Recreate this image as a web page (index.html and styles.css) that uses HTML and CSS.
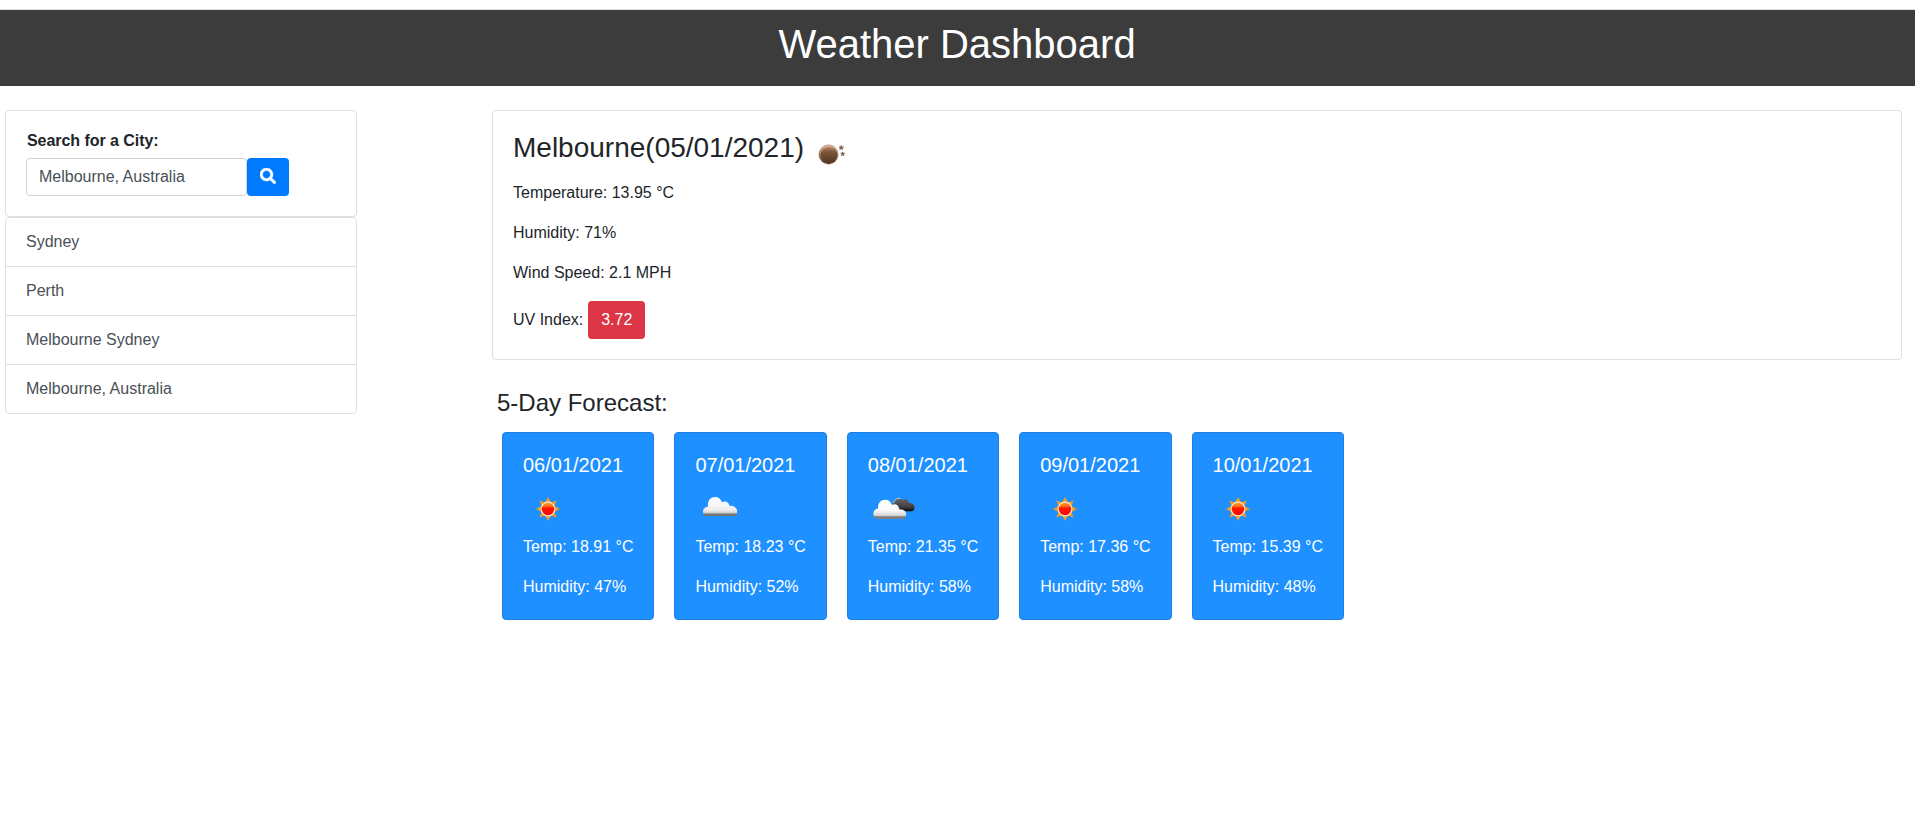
FILE: index.html
```html
<!DOCTYPE html>
<html lang="en">
<head>
<meta charset="utf-8">
<title>Weather Dashboard</title>
<link rel="stylesheet" href="styles.css">
</head>
<body>
<svg class="defs" width="0" height="0">
  <defs>
    <linearGradient id="sunFill" x1="0" y1="0" x2="0" y2="1"><stop offset="0" stop-color="#ffa21a"/><stop offset=".3" stop-color="#ff6a1a"/><stop offset=".42" stop-color="#ff1a00"/><stop offset="1" stop-color="#f80000"/></linearGradient>
    <linearGradient id="cloudFill" x1="0" y1="0" x2="0" y2="1"><stop offset="0" stop-color="#fff"/><stop offset=".4" stop-color="#f6f6f6"/><stop offset=".7" stop-color="#ececec"/><stop offset=".86" stop-color="#c8c8c8"/><stop offset=".88" stop-color="#6e6e6e"/><stop offset="1" stop-color="#777"/></linearGradient>
    <linearGradient id="frontFill" x1="0" y1="0" x2="0" y2="1"><stop offset="0" stop-color="#fff"/><stop offset=".55" stop-color="#fafafa"/><stop offset=".84" stop-color="#d0d0d0"/><stop offset=".88" stop-color="#7a7a7a"/><stop offset="1" stop-color="#808080"/></linearGradient>
    <linearGradient id="darkFill" x1="0" y1="0" x2="0" y2="1"><stop offset="0" stop-color="#666"/><stop offset=".6" stop-color="#444"/><stop offset=".85" stop-color="#222"/><stop offset="1" stop-color="#000"/></linearGradient>
    <linearGradient id="moonFill" x1="0" y1="0" x2="0" y2="1"><stop offset="0" stop-color="#b88a6c"/><stop offset=".3" stop-color="#7d5639"/><stop offset="1" stop-color="#533320"/></linearGradient>
    <linearGradient id="moonRim" x1="0" y1="0" x2="0" y2="1"><stop offset="0" stop-color="#e0b79d"/><stop offset="1" stop-color="#5b3a27"/></linearGradient>
    <symbol id="sun" viewBox="0 0 50 50">
      <path fill="#f79a1d" d="M25 13L28 18.500 33.600 16.400 31.500 22 37 25 31.500 28 33.600 33.600 28 31.500 25 37 22 31.500 16.400 33.600 18.500 28 13 25 18.500 22 16.400 16.400 22 18.500z"/>
      <circle cx="25" cy="25" r="6.800" fill="url(#sunFill)" stroke="#ffe6cc" stroke-width="1.200"/>
    </symbol>
    <symbol id="cloud" viewBox="0 0 50 50">
      <path fill="url(#cloudFill)" d="M12 32C9.500 32 8 30 8 27.500S10 23 13 22.500C12.500 16.500 15.500 13 20 13C23.500 13 26 15 27 18.500C30 16.500 34 18 34.500 22C38 21 42.200 23.500 42.200 27.500C42.200 30 41 32 38 32z"/>
    </symbol>
    <symbol id="clouds" viewBox="0 0 50 50">
      <path fill="url(#darkFill)" d="M25 21C25.500 16 30 12 35 16C38 14 40 16 41 19C44 19 47 20.500 46.500 24C46.300 26 45 27.300 43 27.300H30z"/>
      <path fill="none" stroke="#ccc" stroke-width="1" d="M25.500 19Q27.500 13.500 32.500 14.500"/>
      <path fill="url(#frontFill)" d="M9 35C6.800 34.500 5.300 32 5.300 29.500C5.300 26.800 7.500 25 10 24.500C10 18.500 13 15.800 17 15.800C20.500 15.800 22.500 17.500 24 21C27 19 30.500 20.500 31.500 25.500C35.500 25 38.500 27.500 38.200 30.500C38 33 37 34.500 35 35z"/>
    </symbol>
    <symbol id="moon" viewBox="0 0 50 50">
      <circle cx="22.500" cy="25.500" r="9.700" fill="url(#moonRim)" stroke="#8a6249" stroke-opacity=".6" stroke-width=".6"/>
      <circle cx="23" cy="26.200" r="8.300" fill="url(#moonFill)"/>
      <path fill="#805e4d" stroke="#805e4d" stroke-width=".7" d="M35.200 16.400l.6 1.500 1.700.1-1.300 1 .5 1.600-1.500-.9-1.400.9.400-1.600-1.200-1 1.600-.1zM36.700 22.900l.6 1.300 1.400.1-1.100.9.400 1.500-1.300-.8-1.300.8.400-1.500-1.100-.9 1.400-.1z"/>
    </symbol>
  </defs>
</svg>
<div class="top-strip"></div>
<header class="banner"><h1>Weather Dashboard</h1></header>
<div class="layout">
  <aside class="sidebar">
    <form class="card search">
      <label class="search-label" for="city">Search for a City:</label>
      <div class="search-row">
        <input id="city" class="search-input" type="text" value="Melbourne, Australia">
        <button class="search-btn" type="button" aria-label="Search">
          <svg width="16" height="16" viewBox="0 0 512 512"><path fill="#fff" stroke="#fff" stroke-width="14" d="M505 442.700L405.300 343c-4.500-4.500-10.600-7-17-7H372c27.600-35.300 44-79.700 44-128C416 93.100 322.900 0 208 0S0 93.100 0 208s93.100 208 208 208c48.300 0 92.700-16.400 128-44v16.300c0 6.400 2.500 12.500 7 17l99.700 99.700c9.400 9.400 24.600 9.400 33.900 0l28.300-28.300c9.400-9.400 9.400-24.600.1-34zM208 336c-70.700 0-128-57.200-128-128 0-70.700 57.200-128 128-128 70.700 0 128 57.200 128 128 0 70.700-57.200 128-128 128z"/></svg>
        </button>
      </div>
    </form>
    <ul class="history">
      <li>Sydney</li>
      <li>Perth</li>
      <li>Melbourne Sydney</li>
      <li>Melbourne, Australia</li>
    </ul>
  </aside>
  <main class="content">
    <section class="card current">
      <h3 class="city">Melbourne(05/01/2021)<svg class="icon"><use href="#moon"/></svg></h3>
      <p>Temperature: 13.95 °C</p>
      <p>Humidity: 71%</p>
      <p>Wind Speed: 2.1 MPH</p>
      <p class="uv">UV Index: <span class="uv-badge">3.72</span></p>
    </section>
    <h4 class="forecast-title">5-Day Forecast:</h4>
    <div class="forecast">
      <article class="day"><h5>06/01/2021</h5><svg class="icon"><use href="#sun"/></svg><p>Temp: 18.91 °C</p><p>Humidity: 47%</p></article>
      <article class="day"><h5>07/01/2021</h5><svg class="icon"><use href="#cloud"/></svg><p>Temp: 18.23 °C</p><p>Humidity: 52%</p></article>
      <article class="day"><h5>08/01/2021</h5><svg class="icon"><use href="#clouds"/></svg><p>Temp: 21.35 °C</p><p>Humidity: 58%</p></article>
      <article class="day"><h5>09/01/2021</h5><svg class="icon"><use href="#sun"/></svg><p>Temp: 17.36 °C</p><p>Humidity: 58%</p></article>
      <article class="day"><h5>10/01/2021</h5><svg class="icon"><use href="#sun"/></svg><p>Temp: 15.39 °C</p><p>Humidity: 48%</p></article>
    </div>
  </main>
</div>
</body>
</html>
```
FILE: styles.css
```css
* { box-sizing: border-box; }
body { margin: 0; background: #fff; color: #212529; font: 16px/24px "Liberation Sans", Arial, sans-serif; overflow: hidden; }
h1, h3, h4, h5, p, ul { margin: 0; padding: 0; font-weight: 400; }
.defs { display: block; }
.top-strip { height: 10px; background: #fff; border-bottom: 1px solid #dfdfdf; }
.banner { height: 76px; padding: 10px 1px 0 0; background: #3c3c3c; color: #fff; text-align: center; }
.banner h1 { font-size: 40px; line-height: 48px; }
.layout { display: flex; gap: 135px; padding: 24px 13px 0 5px; }
.sidebar { width: 352px; flex: none; }
.card { border: 1px solid #dfdfdf; border-radius: 4px; background: #fff; }
.search { height: 107px; padding: 17px 20px 0; }
.search-label { display: block; height: 30px; line-height: 26px; padding-left: 1px; font-weight: 700; letter-spacing: -.05px; }
.search-row { display: flex; }
.search-input { width: 221px; height: 38px; padding: 6px 12px; border: 1px solid #ced4da; border-radius: 4px; background: #fff; color: #495057; font: inherit; }
.search-btn { display: flex; align-items: center; justify-content: center; width: 42px; height: 38px; padding: 0 0 2px; border: 0; border-radius: 4px; background: #007bff; }
.history { list-style: none; border: 1px solid #dfdfdf; border-radius: 4px; color: #495057; }
.history li { height: 49px; padding: 12px 20px; }
.history li:first-child { height: 48px; }
.history li:last-child { height: 49px; }
.history li + li { border-top: 1px solid #dfdfdf; }
.content { flex: 1; }
.current { height: 250px; padding: 20px; }
.city { display: flex; height: 50px; font-size: 28px; line-height: 33px; }
.icon { display: block; width: 50px; height: 50px; }
.city .icon { margin: -2px 0 0 2px; }
.current p { margin-bottom: 16px; }
.current .uv { display: flex; align-items: center; gap: 5px; height: 38px; margin: 0; line-height: 34px; }
.uv-badge { display: block; width: 57px; height: 38px; border-radius: 4px; background: #dc3545; color: #fff; line-height: 37px; text-align: center; }
.forecast-title { margin: 28px 0 15px 5px; font-size: 24px; line-height: 29px; }
.forecast { display: flex; gap: 20px; padding-left: 10px; }
.day { width: 152.400px; height: 188px; padding: 20px 0 0 20px; border: 1px solid #1d7fdf; border-radius: 4px; background: #1e90ff; color: #fff; white-space: nowrap; }
.day h5 { height: 31px; font-size: 20px; line-height: 24px; }
.day .icon { margin-bottom: 1px; }
.day p { margin-bottom: 16px; }
```
